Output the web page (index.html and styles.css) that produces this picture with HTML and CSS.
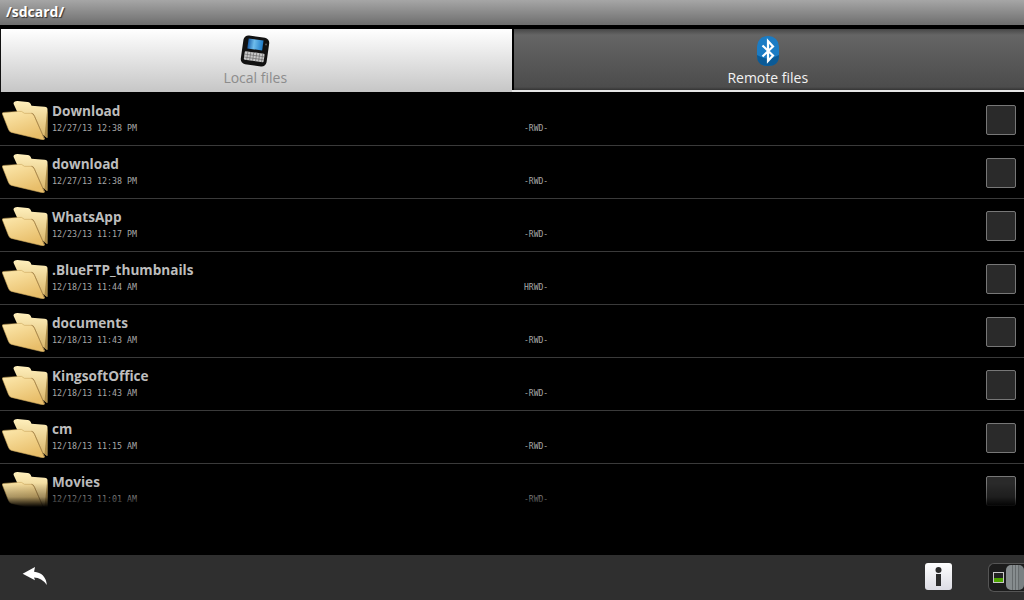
FILE: index.html
```html
<!DOCTYPE html>
<html lang="en">

<head>
    <meta charset="UTF-8">
    <meta name="viewport" content="width=device-width, initial-scale=1.0">
    <title>BlueFTP</title>
    <link rel="stylesheet" href="styles.css">
</head>

<body>
    <svg class="defs" width="0" height="0">
        <defs>
            <linearGradient id="folder-back" x1="0" y1="0" x2="0" y2="1">
                <stop offset="0" stop-color="#fff0bd"/>
                <stop offset="1" stop-color="#d9b568"/>
            </linearGradient>
            <linearGradient id="folder-front" x1="0" y1="0" x2="0.5" y2="1">
                <stop offset="0" stop-color="#fde9ae"/>
                <stop offset="1" stop-color="#e8be6a"/>
            </linearGradient>
            <symbol id="folder" viewBox="1.500 0 46 42" preserveAspectRatio="none">
                <path d="M13 4 Q13 1 17 1 L27 2 Q30 2 31 6 L44 7 Q47 7 47 10 L47 40 L20 20Z" fill="url(#folder-back)"/>
                <path d="M44 38 L46.500 12 L47 12 L46.500 40Z" fill="#b08f4a"/>
                <path d="M2 15 Q1 13 4 13 L18 12 Q21 11 24 14 L31 14 Q33 14 34 17 L44 41 Q44 42 41 41.500 L11 34 Q9 33.500 8 31Z" fill="url(#folder-front)" stroke="#c9a65c" stroke-width="0.6"/>
                <path d="M31 14 Q33 14 34 17 L44 41" fill="none" stroke="#a3824a" stroke-width="0.9"/>
            </symbol>
        </defs>
    </svg>

    <div class="title-bar">/sdcard/</div>

    <div class="tabs">
        <div class="tab tab-active">
            <svg class="tab-icon" viewBox="0 0 30 32" width="30" height="32">
                <defs>
                    <linearGradient id="phone-screen" x1="0" y1="0" x2="1" y2="0">
                        <stop offset="0" stop-color="#1a5ea8"/>
                        <stop offset="0.4" stop-color="#6fbdec"/>
                        <stop offset="1" stop-color="#1f7cc8"/>
                    </linearGradient>
                </defs>
                <g transform="rotate(8 15 16)">
                    <rect x="2" y="1.500" width="26" height="29" rx="5" fill="#111"/>
                    <rect x="7" y="4.500" width="15" height="10" fill="url(#phone-screen)"/>
                    <circle cx="25" cy="8" r="1" fill="#555"/>
                    <rect x="5" y="17.500" width="20" height="8.500" rx="1" fill="#c8c8c8"/>
                    <path d="M5 20.500 H25 M5 23.500 H25 M8 17.500 V26 M11 17.500 V26 M14 17.500 V26 M17 17.500 V26 M20 17.500 V26 M23 17.500 V26" stroke="#666" stroke-width="0.6" fill="none"/>
                </g>
            </svg>
            <span class="tab-label">Local files</span>
        </div>
        <div class="tab tab-remote">
            <svg class="tab-icon" viewBox="0 0 24 32" width="24" height="32">
                <rect x="1" y="1" width="22" height="30" rx="10.500" fill="#1b7cc4"/>
                <path d="M1 20 Q12 27 23 20 L23 21 Q23 31 12 31 Q1 31 1 21Z" fill="#0a5a96"/>
                <path d="M6.500 10.500 L17 20.500 L12 26 L12 6 L17 11.500 L6.500 21.500" fill="none" stroke="#fff" stroke-width="2.200"/>
            </svg>
            <span class="tab-label">Remote files</span>
        </div>
    </div>

    <div class="file-list">
        <div class="file-row">
            <svg class="folder" width="46" height="40"><use href="#folder"/></svg>
            <div class="file-info">
                <div class="file-name">Download</div>
                <div class="file-date">12/27/13 12:38 PM</div>
            </div>
            <div class="file-attrs">-RWD-</div>
            <div class="check"></div>
        </div>
        <div class="file-row">
            <svg class="folder" width="46" height="40"><use href="#folder"/></svg>
            <div class="file-info">
                <div class="file-name">download</div>
                <div class="file-date">12/27/13 12:38 PM</div>
            </div>
            <div class="file-attrs">-RWD-</div>
            <div class="check"></div>
        </div>
        <div class="file-row">
            <svg class="folder" width="46" height="40"><use href="#folder"/></svg>
            <div class="file-info">
                <div class="file-name">WhatsApp</div>
                <div class="file-date">12/23/13 11:17 PM</div>
            </div>
            <div class="file-attrs">-RWD-</div>
            <div class="check"></div>
        </div>
        <div class="file-row">
            <svg class="folder" width="46" height="40"><use href="#folder"/></svg>
            <div class="file-info">
                <div class="file-name">.BlueFTP_thumbnails</div>
                <div class="file-date">12/18/13 11:44 AM</div>
            </div>
            <div class="file-attrs">HRWD-</div>
            <div class="check"></div>
        </div>
        <div class="file-row">
            <svg class="folder" width="46" height="40"><use href="#folder"/></svg>
            <div class="file-info">
                <div class="file-name">documents</div>
                <div class="file-date">12/18/13 11:43 AM</div>
            </div>
            <div class="file-attrs">-RWD-</div>
            <div class="check"></div>
        </div>
        <div class="file-row">
            <svg class="folder" width="46" height="40"><use href="#folder"/></svg>
            <div class="file-info">
                <div class="file-name">KingsoftOffice</div>
                <div class="file-date">12/18/13 11:43 AM</div>
            </div>
            <div class="file-attrs">-RWD-</div>
            <div class="check"></div>
        </div>
        <div class="file-row">
            <svg class="folder" width="46" height="40"><use href="#folder"/></svg>
            <div class="file-info">
                <div class="file-name">cm</div>
                <div class="file-date">12/18/13 11:15 AM</div>
            </div>
            <div class="file-attrs">-RWD-</div>
            <div class="check"></div>
        </div>
        <div class="file-row file-row-last">
            <svg class="folder" width="46" height="40"><use href="#folder"/></svg>
            <div class="file-info">
                <div class="file-name">Movies</div>
                <div class="file-date">12/12/13 11:01 AM</div>
            </div>
            <div class="file-attrs">-RWD-</div>
            <div class="check"></div>
        </div>
        <div class="list-fade"></div>
    </div>

    <div class="footer">
        <svg class="back-icon" viewBox="0 0 26 20" width="26" height="19">
            <path d="M0 7 L13 0 L12 5 Q24 6 25.500 19 Q20 11 12 11 L13 14Z" fill="#fff"/>
        </svg>
        <div class="footer-right">
            <svg class="info-icon" viewBox="0 0 27 27" width="27" height="27">
                <defs>
                    <linearGradient id="info-bg" x1="0" y1="0" x2="0" y2="1">
                        <stop offset="0" stop-color="#ffffff"/>
                        <stop offset="1" stop-color="#dcdce4"/>
                    </linearGradient>
                </defs>
                <rect width="27" height="27" rx="3" fill="url(#info-bg)"/>
                <circle cx="13.500" cy="7" r="3" fill="#2b2b2b"/>
                <rect x="11" y="11" width="5" height="12" fill="#2b2b2b"/>
            </svg>
            <div class="toggle">
                <div class="toggle-screen"></div>
                <div class="toggle-knob"></div>
            </div>
        </div>
    </div>
</body>
</html>
```

FILE: styles.css
```css
* {
    margin: 0;
    padding: 0;
    box-sizing: border-box;
}

body {
    width: 1024px;
    height: 600px;
    overflow: hidden;
    background-color: #000;
    font-family: "Open Sans", "Noto Sans", sans-serif;
    display: flex;
    flex-direction: column;
}

.defs {
    display: block;
    height: 0;
}

.title-bar {
    height: 25px;
    padding-left: 6px;
    background: linear-gradient(#a6a6a6, #6e6e6e);
    color: #fff;
    font-size: 14px;
    font-weight: 700;
    line-height: 24px;
    text-shadow: 1px 1px 1px #333;
}

.tabs {
    display: flex;
    gap: 2px;
    height: 64px;
    margin-top: 4px;
    background: linear-gradient(to bottom, #000 0, #000 61px, #e6e6e6 61px, #e6e6e6 63px, #000 63px);
}

.tab {
    flex: 1;
    height: 61px;
    display: flex;
    flex-direction: column;
    align-items: center;
    padding-top: 6px;
    padding-right: 2px;
}

.tab-active {
    border-left: 1px solid #111;
    height: 63px;
    background: linear-gradient(#fff, #c6c6c6);
    color: #8c8c8c;
}

.tab-remote {
    background: linear-gradient(#474747 0, #656565 6px, #4c4c4c 58px, #353535 100%);
    color: #f2f2f2;
}

.tab-icon {
    display: block;
    height: 32px;
}

.tab-label {
    font-size: 14px;
    line-height: 19px;
    margin-top: 1px;
}

.file-list {
    position: relative;
    height: 462px;
    overflow: hidden;
}

.file-row {
    display: flex;
    align-items: flex-start;
    height: 53px;
    border-bottom: 1px solid #3a3a3a;
    padding-left: 2px;
    padding-top: 7px;
}

.file-row-last {
    border-bottom: none;
}

.folder {
    flex: none;
    width: 46px;
    height: 40px;
}

.file-info {
    width: 473px;
    margin-left: 4px;
}

.file-name {
    color: #bdbdbd;
    font-size: 13.600px;
    font-weight: 700;
    line-height: 20px;
    margin-top: 1px;
}

.file-date {
    color: #a8a8a8;
    font-family: "DejaVu Sans Mono", monospace;
    font-size: 8.300px;
    line-height: 12px;
    margin-top: 1px;
}

.file-attrs {
    width: 462px;
    margin-left: -1px;
    color: #a8a8a8;
    font-family: "DejaVu Sans Mono", monospace;
    font-size: 8px;
    line-height: 12px;
    margin-top: 23px;
}

.check {
    width: 30px;
    height: 30px;
    margin-top: 5px;
    border: 1px solid #777;
    border-radius: 2px;
    background-color: #2a2a2a;
}

/* edge fade of the scrolling list, solid black below the last row */
.list-fade {
    position: absolute;
    left: 0;
    right: 0;
    top: 390px;
    bottom: 0;
    background: linear-gradient(rgba(0, 0, 0, 0), rgba(0, 0, 0, 0.3) 14px, #000 24px);
}

.footer {
    height: 45px;
    margin-top: auto;
    padding-left: 22px;
    background-color: #2f2f2f;
    display: flex;
    align-items: center;
    justify-content: space-between;
}

.back-icon {
    margin-bottom: 2px;
}

.footer-right {
    display: flex;
    align-items: center;
    gap: 36px;
}

.info-icon {
    margin-bottom: 2px;
}

.toggle {
    width: 36px;
    height: 29px;
    border: 1px solid #555;
    border-right: none;
    border-radius: 6px 0 0 6px;
    background-color: #1c1c1c;
    display: flex;
    align-items: center;
    justify-content: space-between;
    padding-left: 4px;
}

.toggle-screen {
    width: 11px;
    height: 11px;
    border: 1px solid #c8c8c8;
    background: linear-gradient(#222 0, #222 60%, #4da400 60%);
}

.toggle-knob {
    width: 18px;
    height: 25px;
    border-radius: 5px;
    background: linear-gradient(90deg, #868c8e 0, #868c8e 6px, #666b6d 6px, #666b6d 7px, #868c8e 7px, #868c8e 9px, #666b6d 9px, #666b6d 10px, #868c8e 10px, #868c8e 12px, #666b6d 12px, #666b6d 13px, #7a8082 13px);
}
```
